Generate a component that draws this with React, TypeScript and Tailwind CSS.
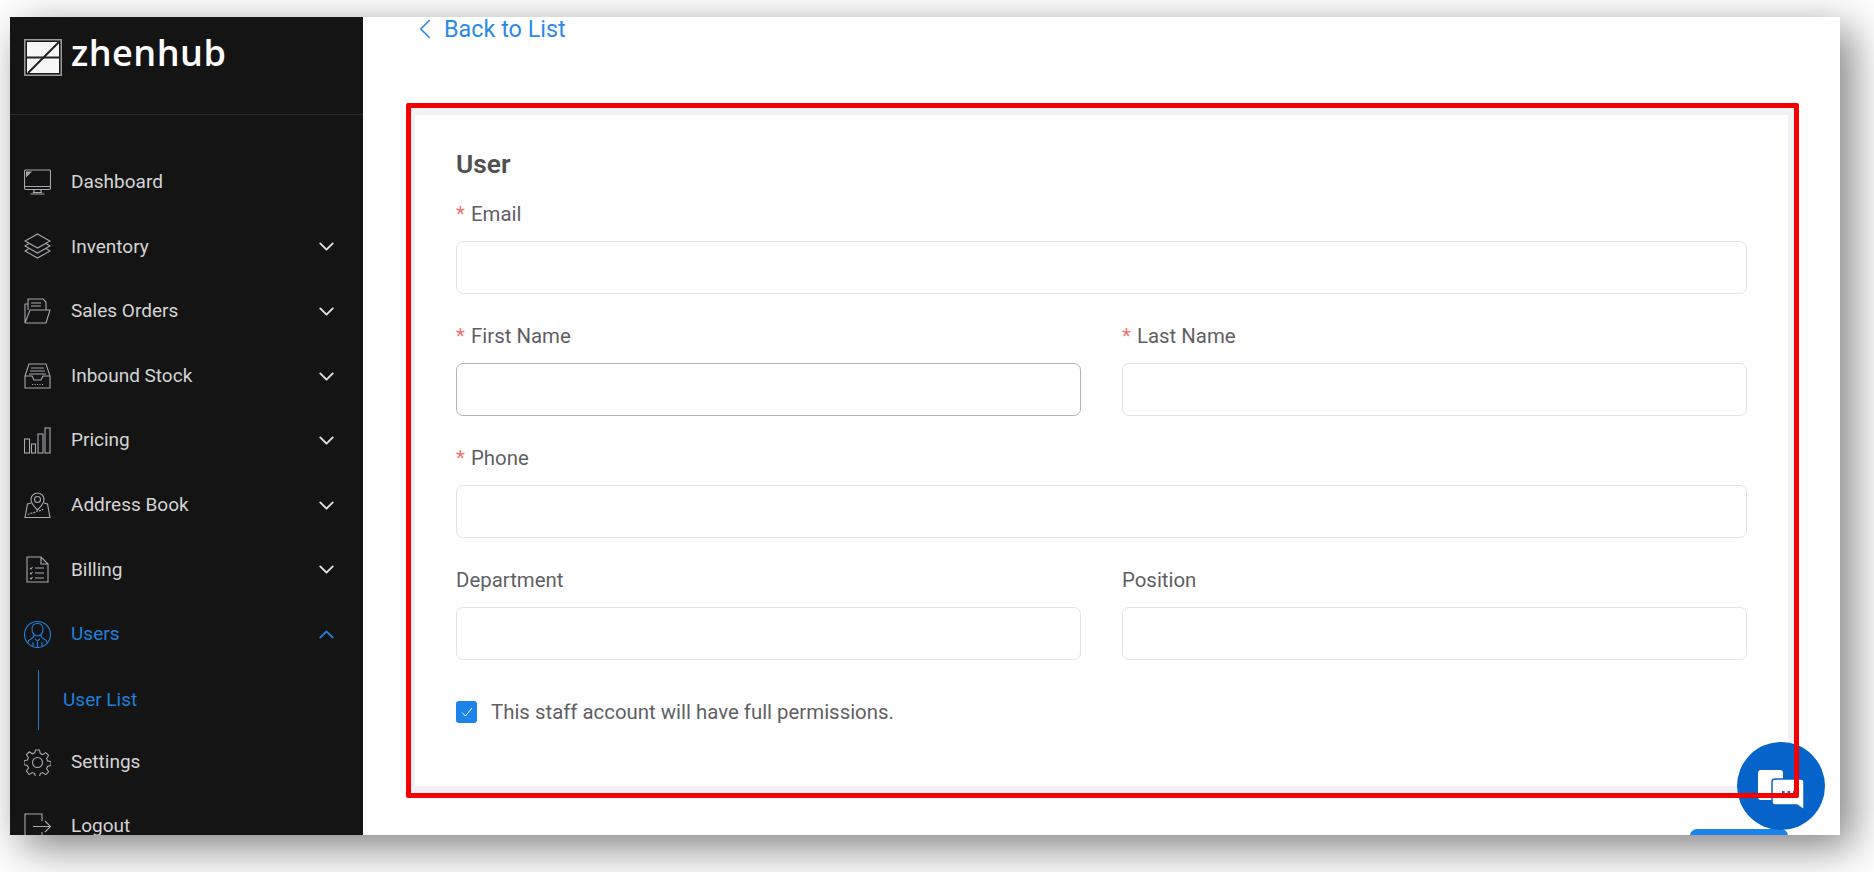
import { ChevronDown, ChevronLeft, ChevronUp } from "lucide-react";
import React from "react";

type IconProps = { className?: string };

const Svg = ({ className, children }: IconProps & { children: React.ReactNode }) => (
  <svg viewBox="0 0 27 27" fill="none" stroke="currentColor" strokeWidth="1.100" className={"h-[27px] w-[27px] shrink-0 " + (className || "")}>
    {children}
  </svg>
);

const MonitorIcon = () => (
  <Svg>
    <rect x="0.500" y="1" width="26" height="19.500" rx="1.500" />
    <path d="M0.500 17.500h26M10.500 20.500l-1 3h8l-1-3M6.500 25h14" />
    <path d="M2 2.500h6l-6 6z" fill="currentColor" stroke="none" />
  </Svg>
);
const LayersIcon = () => (
  <Svg>
    <path d="M13.500 1 26 8l-12.500 7L1 8z" />
    <path d="M5 10.500 1 13l12.500 7L26 13l-4-2.500" />
    <path d="M5 15.500 1 18l12.500 7L26 18l-4-2.500" />
  </Svg>
);
const FolderIcon = () => (
  <Svg>
    <path d="M1 25V6h3M1 25h21l4-13H6L1 25" />
    <path d="M4 12V1h15l3 3v8M7 5h10M7 8h10" />
  </Svg>
);
const InboxIcon = () => (
  <Svg>
    <path d="M1 13 5 1h17l4 12v12H1z" />
    <path d="M1 13h7l2 4h7l2-4h7" />
    <path d="M7 5h13M6 8h15M5 11h17" />
    <path d="M8 21.500h11" strokeDasharray="1 1.500" />
  </Svg>
);
const BarsIcon = () => (
  <Svg>
    <rect x="0.500" y="12" width="5" height="14" />
    <rect x="7.500" y="17" width="4" height="9" />
    <rect x="14" y="7" width="5" height="19" />
    <rect x="21" y="1" width="5" height="25" />
  </Svg>
);
const MapIcon = () => (
  <Svg>
    <path d="M13.500 1a6.500 6.500 0 0 0-6.500 6.500c0 4 6.500 10.500 6.500 10.500S20 11.500 20 7.500A6.500 6.500 0 0 0 13.500 1z" />
    <circle cx="13.500" cy="7.500" r="3" />
    <path d="M7 11 3.500 12 1 25.500h25L23.500 12 20 11" />
    <path d="M4 23c2-3 5-1 7-3s6 0 8-3" strokeDasharray="2 1" />
  </Svg>
);
const DocIcon = () => (
  <Svg>
    <path d="M3 1h14l7 7v18H3zM17 1v7h7" />
    <path d="M6 12l1 1 1.500-2M11 12h9M6 17l1 1 1.500-2M11 17h9M6 22l1 1 1.500-2M11 22h9" />
  </Svg>
);
const UserCircleIcon = () => (
  <Svg>
    <circle cx="13.500" cy="13.500" r="13" />
    <path d="M8 8c0-4 3-5.500 5.500-5.500S19 4 19 8c0 3-1.500 7-5.500 7S8 11 8 8z" />
    <path d="M10 14c0 2-1 3-3 4-2 1-3 2-3.500 4M17 14c0 2 1 3 3 4 2 1 3 2 3.500 4M11 18l2.500 2 2.500-2M13.500 20v6M9 21v4M18 21v4" />
  </Svg>
);
const GearIcon = () => (
  <Svg>
    <circle cx="13.500" cy="13.500" r="5" />
    <path d="M11.500 1h4l.8 3.600 2.400 1 3.100-2 2.800 2.800-2 3.100 1 2.400 3.400.6v4l-3.400.8-1 2.400 2 3.100-2.800 2.800-3.100-2-2.400 1-.8 3.400h-4l-.8-3.400-2.400-1-3.100 2L2.400 22l2-3.100-1-2.400L0 15.700v-4l3.400-.6 1-2.400-2-3.100L5.200 2.800l3.100 2 2.400-1z" />
  </Svg>
);
const LogoutIcon = () => (
  <Svg>
    <path d="M18 8V1H1v25h17v-7" />
    <path d="M9 13.500h17M21 8l5.500 5.500L21 19" />
  </Svg>
);

const LogoMark = () => (
  <svg viewBox="0 0 38 37" className="h-[37px] w-[38px] shrink-0">
    <rect x="0.750" y="0.750" width="36.500" height="35.500" fill="#1a1a1a" stroke="#9a9a9a" strokeWidth="1.500" />
    <rect x="3" y="3" width="32" height="31" fill="#f6f6f6" />
    <path d="M3 18.500h32" stroke="#222" strokeWidth="2" />
    <path d="M4 34 35 3" stroke="#222" strokeWidth="2" />
  </svg>
);

const navItems = [
  { label: "Dashboard", icon: <MonitorIcon />, chevron: false },
  { label: "Inventory", icon: <LayersIcon />, chevron: true },
  { label: "Sales Orders", icon: <FolderIcon />, chevron: true },
  { label: "Inbound Stock", icon: <InboxIcon />, chevron: true },
  { label: "Pricing", icon: <BarsIcon />, chevron: true },
  { label: "Address Book", icon: <MapIcon />, chevron: true },
  { label: "Billing", icon: <DocIcon />, chevron: true },
];

const NavRow = ({ label, icon, chevron }: { label: string; icon: React.ReactNode; chevron: boolean }) => (
  <div className="flex h-[64.600px] items-center pl-[14px] pr-[24px] text-[#d4d4d6]">
    <span className="text-[#a8a8b0]">{icon}</span>
    <span className="ml-[20px] text-[19px]">{label}</span>
    {chevron && <ChevronDown className="ml-auto h-[25px] w-[25px] text-[#e2e2e2]" strokeWidth={1.800} />}
  </div>
);

const Field = ({ label, required, focused, full }: { label: string; required?: boolean; focused?: boolean; full?: boolean }) => (
  <div className={full ? "col-span-2" : ""}>
    <label className="flex h-[28px] items-center pt-[2px] text-[20.400px] text-[#5f5f63]">
      {required && <span className="mr-[5px] w-[10px] text-[#ee7272]">*</span>}
      {label}
    </label>
    <input
      className={
        "mt-[14px] block h-[53px] w-full rounded-[7px] border bg-white " +
        (focused ? "border-[#b4b4b8]" : "border-[#e3e3e7]")
      }
    />
  </div>
);

const App = () => {
  return (
    <div className="h-[872px] w-[1874px] overflow-hidden bg-white pl-[10px] pt-[17px] font-['Roboto',sans-serif]">
      <div className="relative flex h-[818px] w-[1830px] overflow-hidden bg-white shadow-[12px_12px_40px_rgba(0,0,0,0.5)]">
        {/* sidebar */}
        <aside className="w-[353px] shrink-0 bg-[#141414]">
          <div className="flex h-[98px] items-start gap-[9px] border-b border-[#2a2a2a] pl-[14px] pt-[22px]">
            <LogoMark />
            <span className="mt-[-4px] font-['Open_Sans',sans-serif] text-[36px] font-semibold leading-[36px] tracking-[0.5px] text-white">zhenhub</span>
          </div>
          <nav className="pt-[35px]">
            {navItems.map((item) => (
              <NavRow key={item.label} {...item} />
            ))}
            <div className="flex h-[64.600px] items-center pl-[14px] pr-[24px] text-[#1f80dc]">
              <UserCircleIcon />
              <span className="ml-[20px] text-[19px]">Users</span>
              <ChevronUp className="ml-auto h-[25px] w-[25px]" strokeWidth={1.800} />
            </div>
            <div className="ml-[28px] mt-[3px] flex h-[60px] items-center border-l border-[#1f80dc] pl-[24px] text-[19px] text-[#1f80dc]">
              User List
            </div>
            <NavRow label="Settings" icon={<GearIcon />} chevron={false} />
            <NavRow label="Logout" icon={<LogoutIcon />} chevron={false} />
          </nav>
        </aside>

        {/* main */}
        <main className="flex min-w-0 flex-1 flex-col pl-[45px] pr-[45px]">
          <a className="flex h-[24px] items-center text-[23.400px] leading-[24px] text-[#2b8ae8]">
            <ChevronLeft className="mr-[2px] h-[34px] w-[34px] shrink-0" strokeWidth={1.200} />
            Back to List
          </a>
          <div className="mt-[67px] shrink-0 rounded-[4px] border-[7px] border-[#f1f1f5] bg-white px-[41px] pb-[58px] pt-[35px]">
            <h2 className="h-[28px] text-[26.300px] font-semibold leading-[28px] text-[#505050]">User</h2>
            <div className="mt-[21px] grid grid-cols-2 gap-x-[41px] gap-y-[27px]">
              <Field label="Email" required full />
              <Field label="First Name" required focused />
              <Field label="Last Name" required />
              <Field label="Phone" required full />
              <Field label="Department" />
              <Field label="Position" />
            </div>
            <div className="mt-[37px] flex items-center">
              <span className="flex h-[22px] w-[21px] items-center justify-center rounded-[3px] bg-[#1b83ea]">
                <svg viewBox="0 0 14 14" fill="none" stroke="#fff" strokeWidth="1" className="h-[14px] w-[14px]">
                  <path d="M2 7.500l3.500 3.500L12 3" />
                </svg>
              </span>
              <span className="ml-[14px] text-[20.400px] text-[#5f5f63]">This staff account will have full permissions.</span>
            </div>
          </div>
          <button className="mr-[7px] mt-[36px] h-[53px] w-[98px] shrink-0 self-end rounded-[7px] bg-[#1b83ea]" />
        </main>

        {/* chat bubble */}
        <div className="absolute bottom-[5px] right-[15px] z-10 flex h-[88px] w-[88px] items-center justify-center rounded-full bg-[#0563c9]">
          <svg viewBox="0 0 46 40" className="mt-[8px] h-[40px] w-[46px]">
            <rect x="0" y="0" width="25" height="30" rx="3" fill="#fff" />
            <path d="M14 12a3 3 0 0 1 3-3h26a3 3 0 0 1 3 3v28l-7-5H17a3 3 0 0 1-3-3z" fill="#fff" stroke="#0563c9" strokeWidth="1.500" />
            <path d="M24 22h2.500M29.500 22h2.500M35 22h2.500" stroke="#0563c9" strokeWidth="2" />
          </svg>
        </div>

        {/* red annotation */}
        <div className="pointer-events-none absolute left-[396px] top-[86px] z-20 h-[695px] w-[1393px] rounded-[2px] border-[5px] border-[#f50000]" />
      </div>
    </div>
  );
};

export default App;
